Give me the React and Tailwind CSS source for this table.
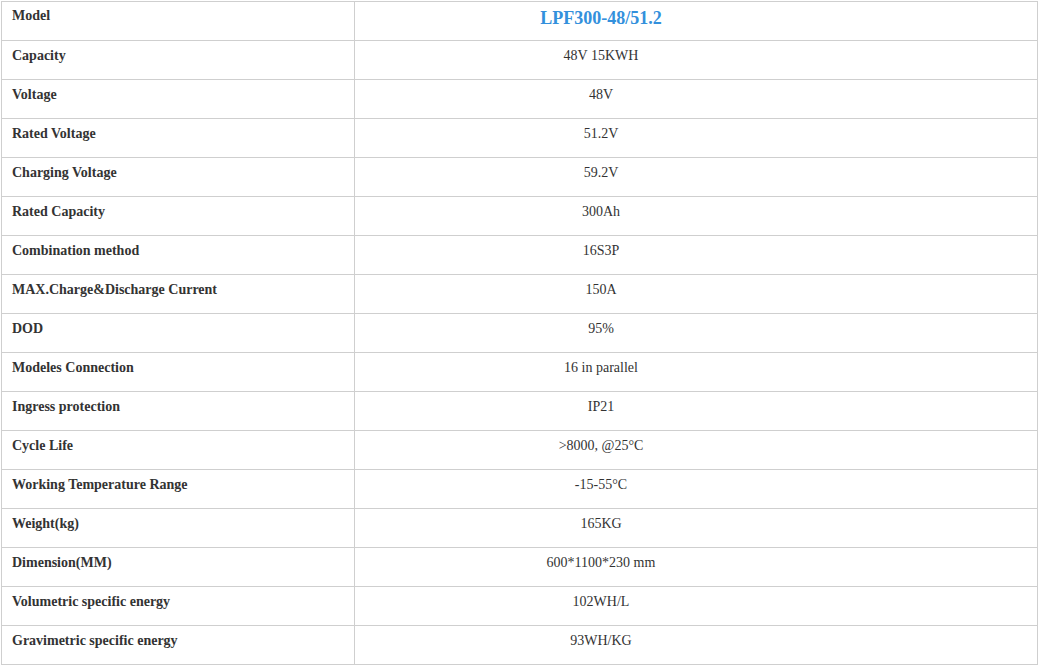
import React from 'react';

const ROWS = [
  ['Capacity', '48V 15KWH'],
  ['Voltage', '48V'],
  ['Rated Voltage', '51.2V'],
  ['Charging Voltage', '59.2V'],
  ['Rated Capacity', '300Ah'],
  ['Combination method', '16S3P'],
  ['MAX.Charge&Discharge Current', '150A'],
  ['DOD', '95%'],
  ['Modeles Connection', '16 in parallel'],
  ['Ingress protection', 'IP21'],
  ['Cycle Life', '>8000, @25°C'],
  ['Working Temperature Range', '-15-55°C'],
  ['Weight(kg)', '165KG'],
  ['Dimension(MM)', '600*1100*230 mm'],
  ['Volumetric specific energy', '102WH/L'],
  ['Gravimetric specific energy', '93WH/KG'],
];

export default function App() {
  return (
    <div className="min-h-screen bg-white pt-px pl-px font-['Liberation_Serif','Times_New_Roman',serif] text-[14px] text-[#333]">
      <div className="w-[1037px] border border-[#cfcfcf]">
        {/* header row */}
        <div className="flex h-[39px] border-b border-[#cfcfcf]">
          <div className="w-[353px] shrink-0 border-r border-[#cfcfcf] pl-[10px] pt-[3px] font-bold leading-[21px]">Model</div>
          <div className="flex-1 pr-[190px] pt-[3px] text-center text-[18px] font-bold leading-[27px] text-[#3390dc]">LPF300-48/51.2</div>
        </div>
        {ROWS.map(([label, value], i) => (
          <div key={label} className={i === ROWS.length - 1 ? 'flex h-[38px]' : 'flex h-[39px] border-b border-[#cfcfcf]'}>
            <div className="w-[353px] shrink-0 border-r border-[#cfcfcf] pl-[10px] pt-[4px] font-bold leading-[21px]">{label}</div>
            <div className="flex-1 pr-[190px] pt-[4px] text-center leading-[21px]">{value}</div>
          </div>
        ))}
      </div>
    </div>
  );
}
